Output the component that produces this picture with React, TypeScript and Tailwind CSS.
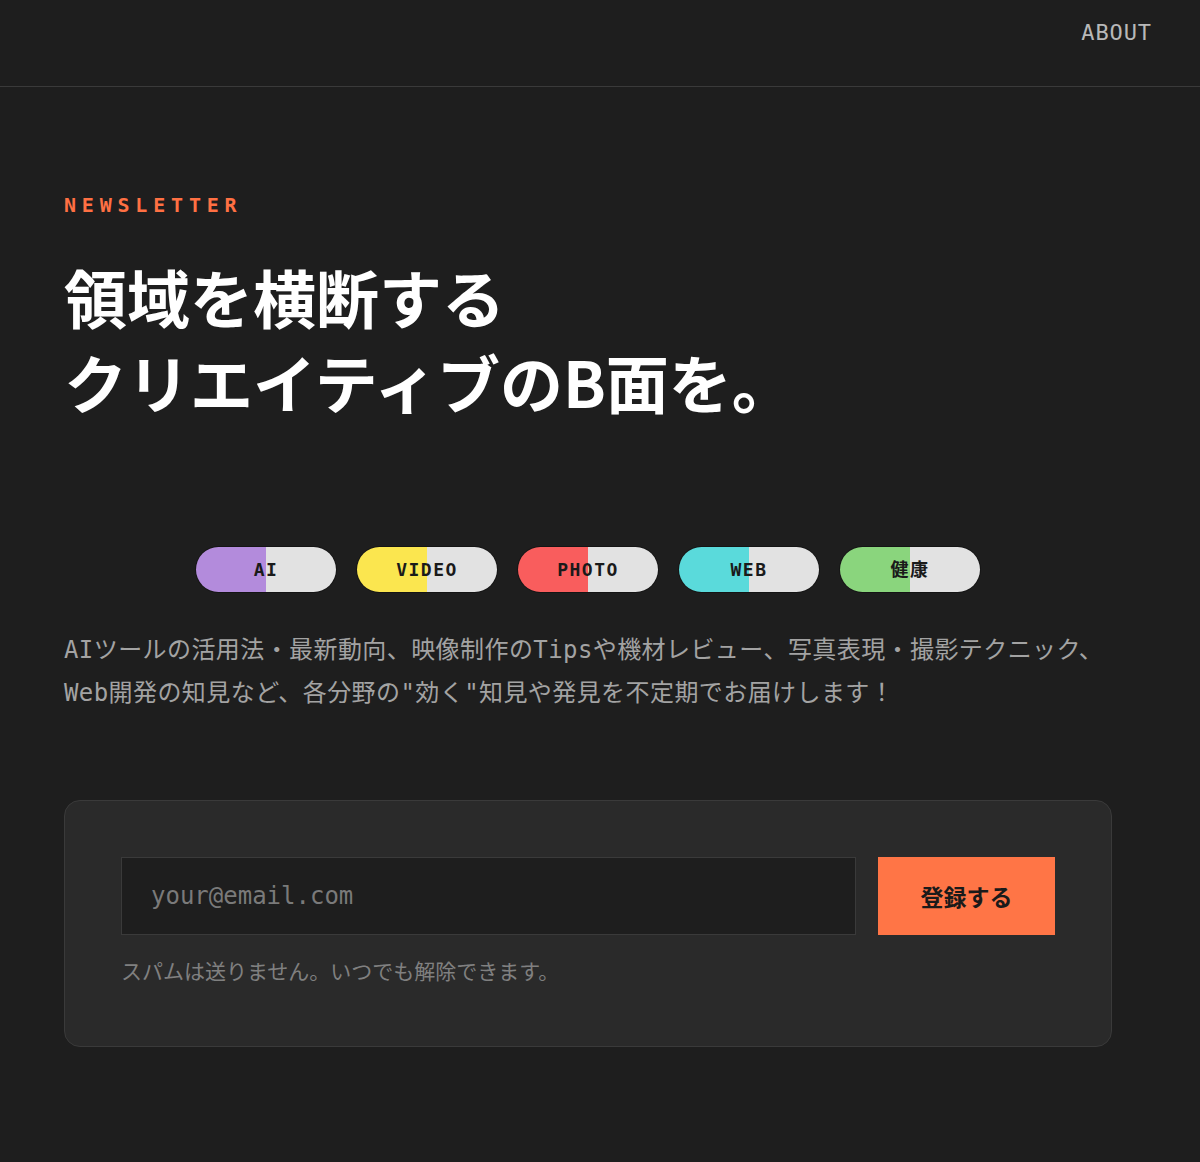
const mono = "font-['DejaVu_Sans_Mono','Noto_Sans_CJK_JP',monospace]"

const tags = [
  { label: "AI", bg: "bg-[linear-gradient(to_right,#b38bdc_50%,#e2e2e2_50%)]" },
  { label: "VIDEO", bg: "bg-[linear-gradient(to_right,#fbe64f_50%,#e2e2e2_50%)]" },
  { label: "PHOTO", bg: "bg-[linear-gradient(to_right,#f95d5d_50%,#e2e2e2_50%)]" },
  { label: "WEB", bg: "bg-[linear-gradient(to_right,#5adadb_50%,#e2e2e2_50%)]" },
  { label: "健康", bg: "bg-[linear-gradient(to_right,#8ad57d_50%,#e2e2e2_50%)]" },
]

export default function App() {
  return (
    <div className="min-h-[1162px] bg-[#1e1e1e] text-white">
      {/* header */}
      <header className="h-[87px] border-b border-[#3a3a3a] px-12 pt-[17px] flex justify-end items-start">
        <a className={`${mono} text-[22px] leading-[32px] tracking-[0.04em] text-[#b8b8b8]`}>ABOUT</a>
      </header>

      <main className="px-16 pt-[104px]">
        <p className={`${mono} text-[20px] leading-[28px] font-bold tracking-[0.29em] text-[#ff7043]`}>
          NEWSLETTER
        </p>

        <h1 className="mt-[34px] font-['Noto_Sans_CJK_JP',sans-serif] font-bold text-[63px] leading-[85px] text-white">
          領域を横断する
          <br />
          クリエイティブのB面を。
        </h1>

        {/* tags */}
        <div className="mt-[124px] flex justify-center gap-[21px] pr-[24px]">
          {tags.map((t) => (
            <span
              key={t.label}
              className={`${t.bg} ${mono} w-[140px] h-[45px] rounded-full flex items-center justify-center text-[18px] font-bold tracking-[0.08em] text-[#1a1a1a] ring-1 ring-black/30`}
            >
              {t.label}
            </span>
          ))}
        </div>

        <p className={`${mono} mt-[37px] whitespace-nowrap text-[24px] leading-[1.8] tracking-[0.42px] text-[#a3a3a3]`}>
          AIツールの活用法・最新動向、映像制作のTipsや機材レビュー、写真表現・撮影テクニック、
          <br />
          Web開発の知見など、各分野の"効く"知見や発見を不定期でお届けします！
        </p>

        {/* signup card */}
        <div className="mt-[85px] w-[1048px] rounded-2xl border border-[#3a3a3a] bg-[#2a2a2a] px-14 pt-14 pb-[58px]">
          <form className="flex gap-[22px]" onSubmit={(e) => e.preventDefault()}>
            <input
              type="email"
              placeholder="your@email.com"
              className={`${mono} flex-1 h-[78px] border border-[#3a3a3a] bg-[#1e1e1e] px-[29px] text-[24px] text-white placeholder:text-[#7a7a7a] outline-none`}
            />
            <button
              type="submit"
              className="w-[177px] h-[78px] bg-[#ff7546] font-['Noto_Sans_CJK_JP',sans-serif] font-bold text-[23px] text-[#1a1a1a]"
            >
              登録する
            </button>
          </form>
          <p className="mt-[17px] font-['Noto_Sans_CJK_JP',sans-serif] text-[21px] leading-[36px] text-[#808080]">
            スパムは送りません。いつでも解除できます。
          </p>
        </div>
      </main>
    </div>
  )
}
